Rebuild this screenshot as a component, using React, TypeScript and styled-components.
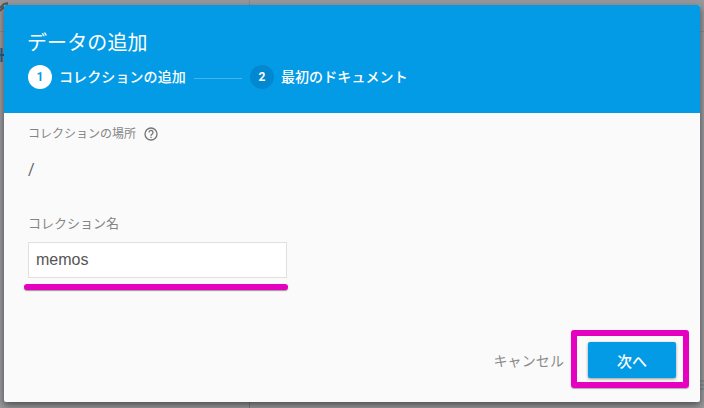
import React from 'react';
import styled, { createGlobalStyle } from 'styled-components';

const GlobalStyle = createGlobalStyle`
  html, body {
    margin: 0;
    padding: 0;
    background: #98989c;
  }
  * {
    box-sizing: border-box;
  }
`;

const fontStack = `Roboto, "Noto Sans CJK JP", sans-serif`;

const Page = styled.div`
  position: relative;
  width: 704px;
  height: 408px;
  overflow: hidden;
  background: #98989c;
  font-family: ${fontStack};
`;

/* dimmed console page behind the dialog */
const BehindLayer = styled.div`
  position: absolute;
  inset: 0;
  display: grid;
  grid-template-columns: 250px 1fr;
  grid-template-rows: 32px 1fr;
`;

const BehindCell = styled.div<{ $right?: boolean }>`
  border-bottom: 1px solid #8a8a8e;
  border-right: ${p => (p.$right ? 'none' : '1px solid #8a8a8e')};
`;

const BehindColumn = styled.div`
  border-right: 1px solid #7c7c80;
`;

const BehindMark = styled.svg<{ $x: number; $y: number }>`
  position: absolute;
  left: ${p => p.$x}px;
  top: ${p => p.$y}px;
`;

const Dialog = styled.div`
  position: relative;
  display: flex;
  flex-direction: column;
  width: 696px;
  height: 397px;
  margin: 5px 4px 6px;
  background: #fafafa;
  border-radius: 2px;
  box-shadow: 0 3px 7px rgba(0, 0, 0, 0.5);
`;

const Header = styled.div`
  display: flex;
  flex-direction: column;
  height: 108px;
  padding: 23px 24px 0;
  background: #039be5;
  color: #fff;
  border-radius: 2px 2px 0 0;
`;

const Title = styled.div`
  margin-left: -1px;
  font-size: 20px;
  line-height: 30px;
  height: 30px;
  letter-spacing: 0.1px;
`;

const Stepper = styled.div`
  display: flex;
  align-items: center;
  margin-top: 7px;
`;

const StepCircle = styled.div<{ $active?: boolean }>`
  display: flex;
  align-items: center;
  justify-content: center;
  width: 24px;
  height: 24px;
  border-radius: 50%;
  font-size: 12px;
  font-weight: 700;
  background: ${p => (p.$active ? '#fff' : '#0288d1')};
  color: ${p => (p.$active ? '#039be5' : '#fff')};
`;

const StepLabel = styled.div`
  margin-left: 7px;
  font-size: 14px;
  font-weight: 500;
  line-height: 20px;
  letter-spacing: 0.1px;
  white-space: nowrap;
`;

const StepLine = styled.div`
  width: 48px;
  height: 1px;
  margin: 2px 8px 0;
  background: #42b4f0;
`;

const Body = styled.div`
  display: flex;
  flex-direction: column;
  flex: 1;
  padding: 12px 24px 0;
`;

const FieldLabel = styled.div<{ $large?: boolean }>`
  display: flex;
  align-items: center;
  font-size: ${p => (p.$large ? '13px' : '12px')};
  line-height: 18px;
  color: #858585;
`;

const HelpIcon = styled.svg`
  width: 16px;
  height: 16px;
  margin-left: 7px;
  color: #757575;
`;

const PathValue = styled.div`
  margin-top: 16px;
  margin-bottom: 34px;
  font-size: 16px;
  line-height: 22px;
  color: #616161;
`;

const NameInput = styled.div`
  display: flex;
  align-items: center;
  width: 259px;
  height: 36px;
  margin-top: 9px;
  padding-left: 7px;
  background: #fff;
  border: 1px solid #e0e0e0;
  font-family: "Liberation Sans", Arial, sans-serif;
  font-size: 16px;
  color: #555;
`;

const Underline = styled.div`
  position: absolute;
  left: 20px;
  top: 279px;
  width: 264px;
  height: 6px;
  border-radius: 3px;
  background: #e600c0;
  box-shadow: 0 1px 1px rgba(0, 0, 0, 0.4);
`;

const Footer = styled.div`
  display: flex;
  align-items: center;
  justify-content: flex-end;
  padding: 0 24px 24px;
`;

const CancelButton = styled.div`
  font-size: 14px;
  color: #8a8a8a;
  margin-right: 24px;
  letter-spacing: 0.1px;
`;

const NextButton = styled.div`
  display: flex;
  align-items: center;
  justify-content: center;
  width: 88px;
  height: 36px;
  border-radius: 2px;
  background: #039be5;
  color: #fff;
  font-size: 15px;
  font-weight: 500;
  box-shadow: 0 1px 3px rgba(0, 0, 0, 0.4);
`;

const ButtonMark = styled.div`
  position: absolute;
  left: 567px;
  top: 325px;
  width: 118px;
  height: 58px;
  border: 6px solid #e600c0;
  border-radius: 3px;
  box-shadow: 0 1px 1px rgba(0, 0, 0, 0.3);
`;

export default function App() {
  return (
    <Page>
      <GlobalStyle />
      <BehindLayer>
        <BehindCell />
        <BehindCell $right />
        <BehindColumn />
        <div />
      </BehindLayer>
      <BehindMark $x={0} $y={2} width="10" height="12" viewBox="0 0 10 12">
        <path d="M0 9 L4 5 L8 3 M0 6 L4 2 L8 1" stroke="#5a5a5c" strokeWidth="2" fill="none" />
      </BehindMark>
      <BehindMark $x={0} $y={47} width="4" height="16" viewBox="0 0 4 16">
        <path d="M0 8 H4 M1.5 1 V15" stroke="#1f5f92" strokeWidth="2" fill="none" />
      </BehindMark>
      <BehindMark $x={700} $y={380} width="4" height="12" viewBox="0 0 4 12">
        <path d="M0 1 H4 M0 5 H4 M0 9 H4" stroke="#6f7c88" strokeWidth="1" fill="none" />
      </BehindMark>
      <Dialog>
        <Header>
          <Title>データの追加</Title>
          <Stepper>
            <StepCircle $active>1</StepCircle>
            <StepLabel>コレクションの追加</StepLabel>
            <StepLine />
            <StepCircle>2</StepCircle>
            <StepLabel>最初のドキュメント</StepLabel>
          </Stepper>
        </Header>
        <Body>
          <FieldLabel>
            コレクションの場所
            <HelpIcon viewBox="0 0 24 24" fill="none" stroke="currentColor">
              <circle cx="12" cy="12" r="9" strokeWidth="2" />
              <path d="M9 9.6a3 3 0 1 1 4.7 2.5c-1.1.7-1.7 1.3-1.7 2.6" strokeWidth="2" />
              <path d="M12 16v2" strokeWidth="2" />
            </HelpIcon>
          </FieldLabel>
          <PathValue>/</PathValue>
          <FieldLabel $large>コレクション名</FieldLabel>
          <NameInput>memos</NameInput>
          <Underline />
        </Body>
        <Footer>
          <CancelButton>キャンセル</CancelButton>
          <NextButton>次へ</NextButton>
          <ButtonMark />
        </Footer>
      </Dialog>
    </Page>
  );
}
